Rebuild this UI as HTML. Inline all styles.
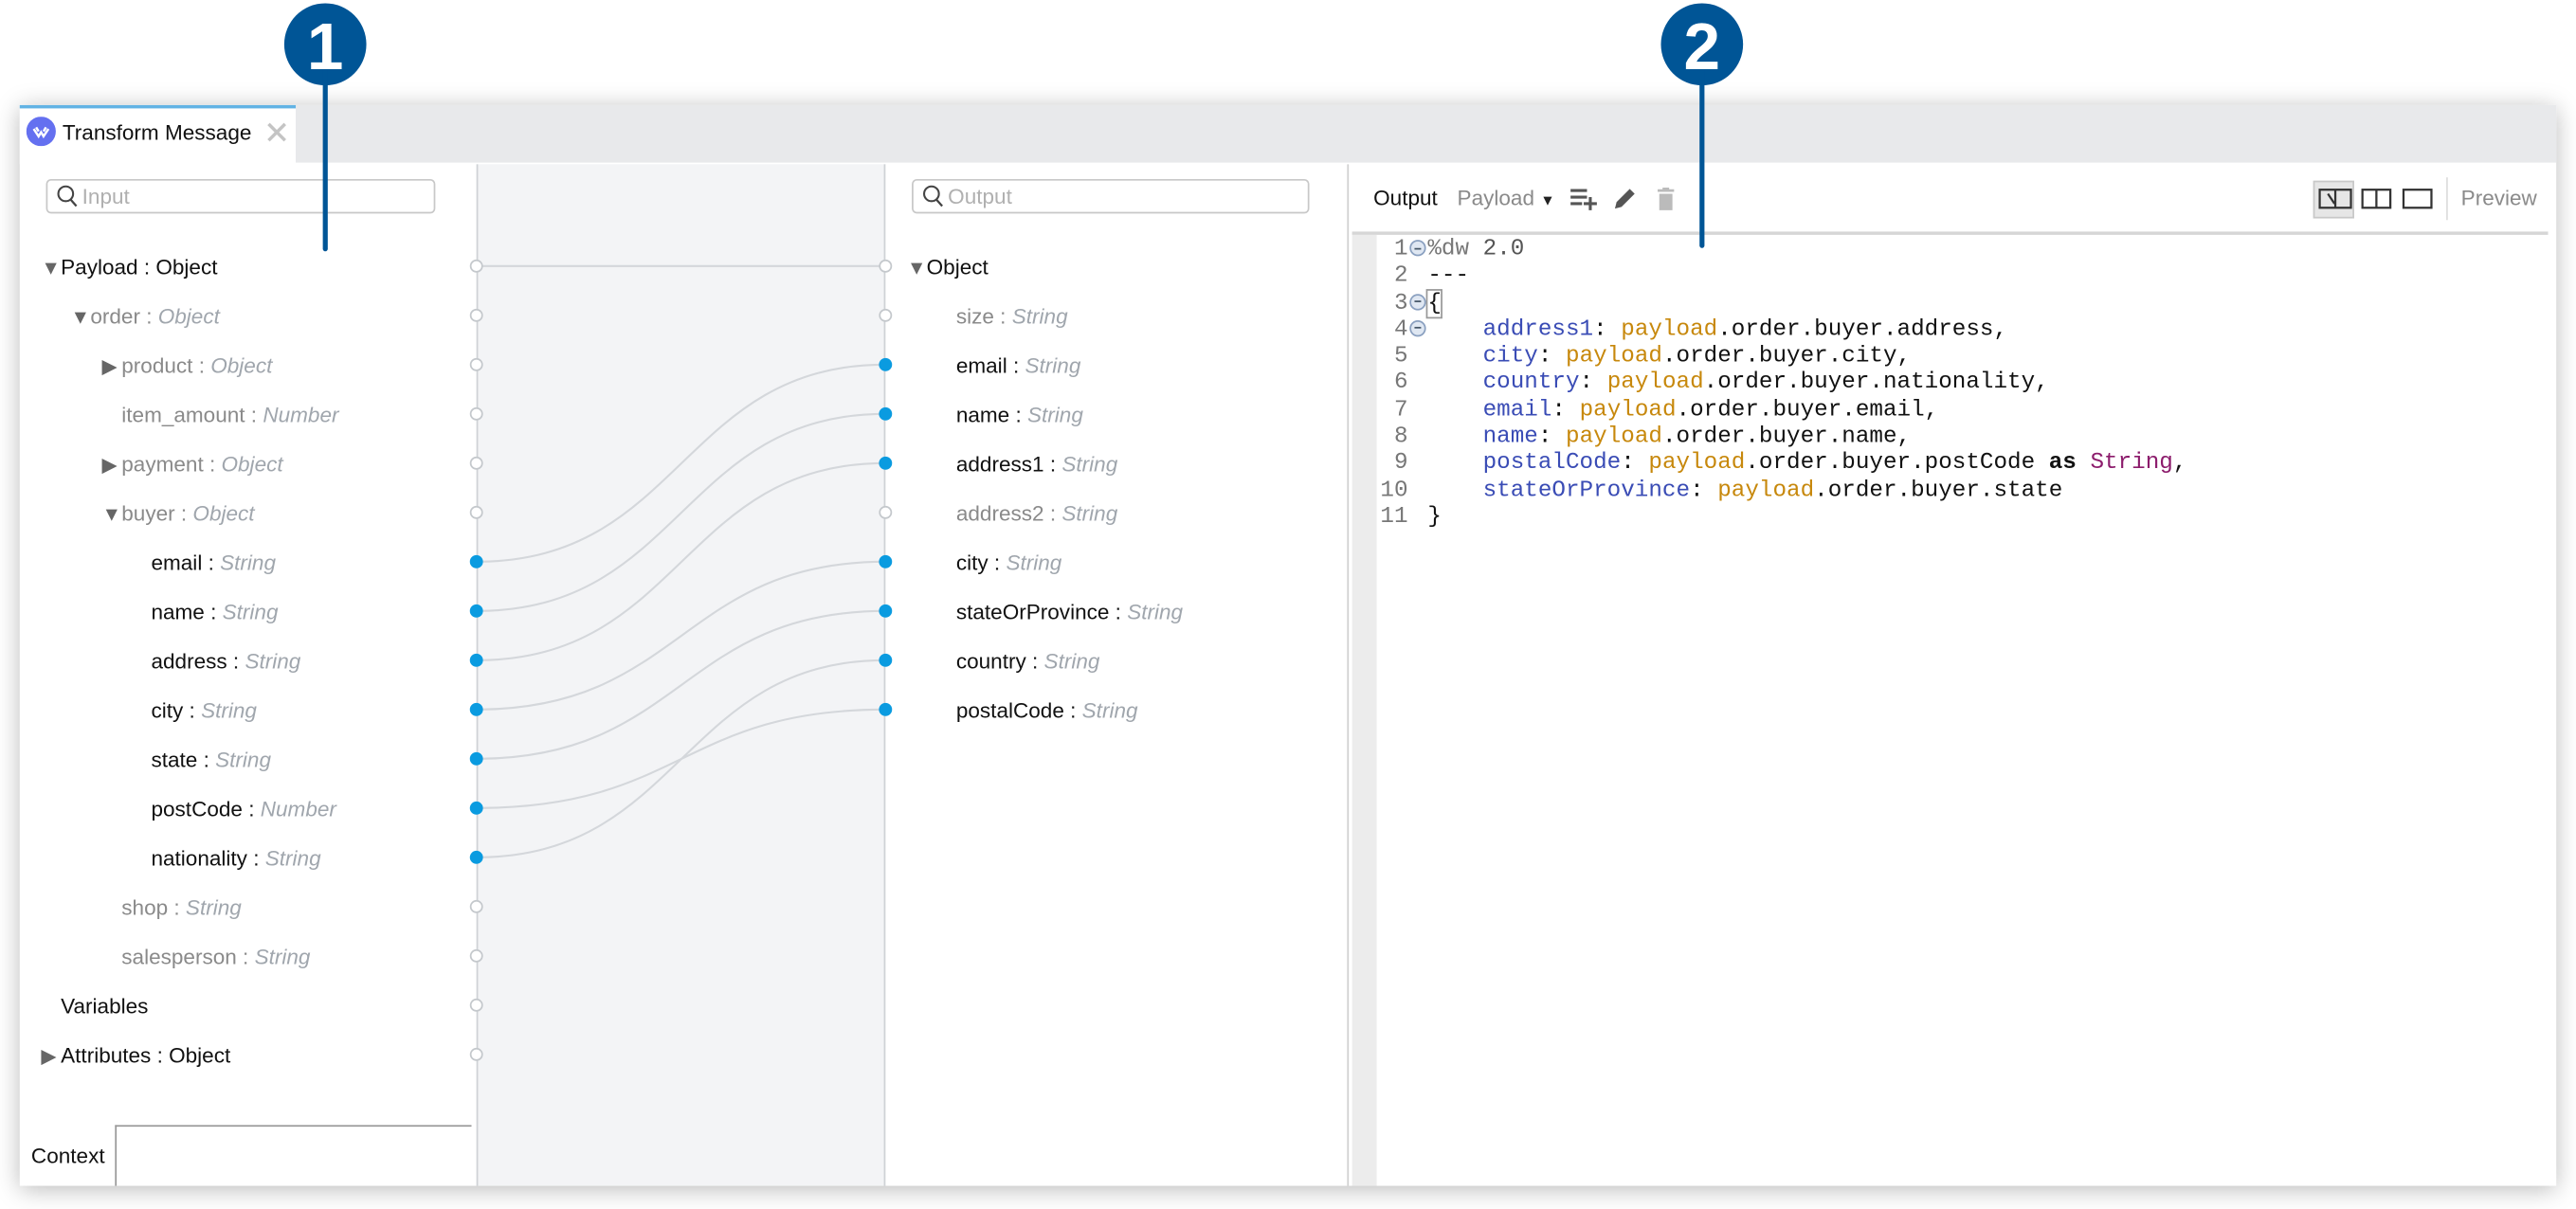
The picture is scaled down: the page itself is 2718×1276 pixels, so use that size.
<!DOCTYPE html>
<html><head><meta charset="utf-8"><style>
html,body{margin:0;padding:0;background:#fff;overflow:hidden;width:2718px;height:1276px}
#s{position:absolute;left:0;top:0;width:1568px;height:736px;transform:scale(1.73342);transform-origin:0 0;font-family:"Liberation Sans",sans-serif;font-size:13px;color:#111}
.a{position:absolute;white-space:nowrap}
.r{position:absolute;white-space:nowrap;line-height:18px;height:18px}
.g{color:#8a8a8a}
.t{color:#a0a6ad;font-style:italic}
.tri{display:inline-block;font-size:12px;color:#666;width:12px;margin-left:-12px}
.code{position:absolute;left:840px;top:144px;font-family:"Liberation Mono",monospace;font-size:14px;line-height:16.3px;white-space:pre;color:#111}
.ln{color:#777;display:inline-block;width:17px;text-align:right}
.k{color:#3a4cb5}.p{color:#c7880c}.s{color:#8c1c6c}
.fs{display:inline-block;width:12px;height:10px;vertical-align:-1px}
.f{display:inline-block;width:10px;height:10px;border:1px solid #8aa0c0;border-radius:50%;background:#dfe7f2;box-sizing:border-box;vertical-align:-1px;margin:0 1px 0 1px;position:relative}
.f:after{content:"";position:absolute;left:2px;top:3.5px;width:4px;height:1px;background:#456}
</style></head><body><div id="s">
<div class="a" style="left:12px;top:64px;width:1544px;height:658px;box-shadow:0 2px 14px rgba(0,0,0,0.28);background:#fff"></div>
<div class="a" style="left:12px;top:64px;width:1544px;height:35px;background:#e8e9eb"></div>
<div class="a" style="left:12px;top:64px;width:168px;height:36px;background:#fff;border-top:2px solid #62b3e4;box-sizing:border-box"></div>
<svg class="a" style="left:16px;top:71px" width="18" height="18" viewBox="0 0 18 18"><circle cx="9" cy="9" r="9" fill="#6470f0"/><path d="M4.5 7.5 L7.5 12 L9 9.5 L10.5 12 L13.5 7.5 M6 6.5 L7.5 9 M12 6.5 L10.5 9" stroke="#fff" stroke-width="1.4" fill="none"/></svg>
<div class="a" style="left:38px;top:72px;font-size:13px;line-height:18px">Transform Message</div>
<svg class="a" style="left:162px;top:74px" width="13" height="13"><path d="M1.5 1.5L11.5 11.5M11.5 1.5L1.5 11.5" stroke="#c4c4c4" stroke-width="2"/></svg>
<div class="a" style="left:290px;top:100px;width:249px;height:622px;background:#f3f4f6;border-left:1px solid #cfd2d6;border-right:1px solid #cfd2d6;box-sizing:border-box"></div>
<div class="a" style="left:820px;top:100px;width:1px;height:622px;background:#d0d0d0"></div>
<div class="a" style="left:28px;top:109px;width:237px;height:21px;border:1px solid #c8c8c8;border-radius:3px;box-sizing:border-box"></div>
<svg class="a" style="left:34px;top:112px" width="14" height="15"><circle cx="6" cy="6" r="4.5" stroke="#444" stroke-width="1.2" fill="none"/><path d="M9 9.5 L12.5 13.5" stroke="#444" stroke-width="1.3"/></svg>
<div class="a" style="left:50px;top:112px;color:#b0b0b0;line-height:16px">Input</div>
<div class="a" style="left:555px;top:109px;width:242px;height:21px;border:1px solid #c8c8c8;border-radius:3px;box-sizing:border-box"></div>
<svg class="a" style="left:561px;top:112px" width="14" height="15"><circle cx="6" cy="6" r="4.5" stroke="#444" stroke-width="1.2" fill="none"/><path d="M9 9.5 L12.5 13.5" stroke="#444" stroke-width="1.3"/></svg>
<div class="a" style="left:577px;top:112px;color:#b0b0b0;line-height:16px">Output</div>
<div class="r" style="left:37px;top:154px"><span class="tri">▼</span>Payload : Object</div>
<div class="r g" style="left:55px;top:184px"><span class="tri">▼</span>order : <span class="t">Object</span></div>
<div class="r g" style="left:74px;top:214px"><span class="tri">▶</span>product : <span class="t">Object</span></div>
<div class="r g" style="left:74px;top:244px">item_amount : <span class="t">Number</span></div>
<div class="r g" style="left:74px;top:274px"><span class="tri">▶</span>payment : <span class="t">Object</span></div>
<div class="r g" style="left:74px;top:304px"><span class="tri">▼</span>buyer : <span class="t">Object</span></div>
<div class="r" style="left:92px;top:334px">email : <span class="t">String</span></div>
<div class="r" style="left:92px;top:364px">name : <span class="t">String</span></div>
<div class="r" style="left:92px;top:394px">address : <span class="t">String</span></div>
<div class="r" style="left:92px;top:424px">city : <span class="t">String</span></div>
<div class="r" style="left:92px;top:454px">state : <span class="t">String</span></div>
<div class="r" style="left:92px;top:484px">postCode : <span class="t">Number</span></div>
<div class="r" style="left:92px;top:514px">nationality : <span class="t">String</span></div>
<div class="r g" style="left:74px;top:544px">shop : <span class="t">String</span></div>
<div class="r g" style="left:74px;top:574px">salesperson : <span class="t">String</span></div>
<div class="r" style="left:37px;top:604px">Variables</div>
<div class="r" style="left:37px;top:634px"><span class="tri">▶</span>Attributes : Object</div>
<div class="r" style="left:564px;top:154px"><span class="tri">▼</span>Object</div>
<div class="r g" style="left:582px;top:184px">size : <span class="t">String</span></div>
<div class="r" style="left:582px;top:214px">email : <span class="t">String</span></div>
<div class="r" style="left:582px;top:244px">name : <span class="t">String</span></div>
<div class="r" style="left:582px;top:274px">address1 : <span class="t">String</span></div>
<div class="r g" style="left:582px;top:304px">address2 : <span class="t">String</span></div>
<div class="r" style="left:582px;top:334px">city : <span class="t">String</span></div>
<div class="r" style="left:582px;top:364px">stateOrProvince : <span class="t">String</span></div>
<div class="r" style="left:582px;top:394px">country : <span class="t">String</span></div>
<div class="r" style="left:582px;top:424px">postalCode : <span class="t">String</span></div>
<div class="a" style="left:70px;top:685px;width:217px;height:37px;border-top:1px solid #999;border-left:1px solid #999;box-sizing:border-box"></div>
<div class="a" style="left:19px;top:695px;line-height:18px">Context</div>
<svg class="a" style="left:0;top:0" width="1568" height="736">
<g fill="none" stroke="#d4d7db" stroke-width="1.2">
<path d="M290 162 L539 162"/>
<path d="M290 342 C415 342 415 222 539 222"/>
<path d="M290 372 C415 372 415 252 539 252"/>
<path d="M290 402 C415 402 415 282 539 282"/>
<path d="M290 432 C415 432 415 342 539 342"/>
<path d="M290 462 C415 462 415 372 539 372"/>
<path d="M290 492 C415 492 415 432 539 432"/>
<path d="M290 522 C415 522 415 402 539 402"/>
</g>
<g fill="#fff" stroke="#c4c8cc" stroke-width="1">
<circle cx="290" cy="162" r="3.5"/><circle cx="290" cy="192" r="3.5"/><circle cx="290" cy="222" r="3.5"/><circle cx="290" cy="252" r="3.5"/><circle cx="290" cy="282" r="3.5"/><circle cx="290" cy="312" r="3.5"/><circle cx="290" cy="552" r="3.5"/><circle cx="290" cy="582" r="3.5"/><circle cx="290" cy="612" r="3.5"/><circle cx="290" cy="642" r="3.5"/>
<circle cx="539" cy="162" r="3.5"/><circle cx="539" cy="192" r="3.5"/><circle cx="539" cy="312" r="3.5"/>
</g>
<g fill="#0a9be0">
<circle cx="290" cy="342" r="4"/><circle cx="290" cy="372" r="4"/><circle cx="290" cy="402" r="4"/><circle cx="290" cy="432" r="4"/><circle cx="290" cy="462" r="4"/><circle cx="290" cy="492" r="4"/><circle cx="290" cy="522" r="4"/>
<circle cx="539" cy="222" r="4"/><circle cx="539" cy="252" r="4"/><circle cx="539" cy="282" r="4"/><circle cx="539" cy="342" r="4"/><circle cx="539" cy="372" r="4"/><circle cx="539" cy="402" r="4"/><circle cx="539" cy="432" r="4"/>
</g>
</svg>
<div class="a" style="left:836px;top:112px;line-height:18px">Output</div>
<div class="a g" style="left:887px;top:112px;line-height:18px">Payload <span style="color:#222;font-size:9px">▼</span></div>
<svg class="a" style="left:955px;top:113px" width="18" height="16"><path d="M1 3h10M1 7h10M1 11h7M13 7v8M9 11h8" stroke="#555" stroke-width="1.8"/></svg>
<svg class="a" style="left:981px;top:113px" width="16" height="16"><path d="M2 14 L3 10 L11 2 L14 5 L6 13 Z" fill="#555"/></svg>
<svg class="a" style="left:1007px;top:113px" width="14" height="16"><path d="M2 3h10M5 2h4" stroke="#bbb" stroke-width="1.6"/><rect x="3" y="5" width="8" height="10" fill="#bbb"/></svg>
<div class="a" style="left:1408px;top:110px;width:25px;height:23px;background:#e6e6e6;border:1px solid #c8c8c8;box-sizing:border-box"></div>
<svg class="a" style="left:1410px;top:113px" width="80" height="16"><g fill="none" stroke="#333" stroke-width="1.3"><rect x="2" y="2.5" width="19" height="11"/><path d="M11.5 2.5v11M7 5l4 6"/><rect x="28" y="2.5" width="17" height="11"/><path d="M36.5 2.5v11"/><rect x="53" y="2.5" width="17" height="11"/></g></svg>
<div class="a" style="left:1489px;top:108px;width:1px;height:26px;background:#ddd"></div>
<div class="a g" style="left:1498px;top:112px;line-height:18px">Preview</div>
<div class="a" style="left:823px;top:141px;width:728px;height:2px;background:#d6d6d6"></div>
<div class="a" style="left:823px;top:143px;width:15px;height:579px;background:#ececec"></div>
<div class="code"><span class="ln">1</span><span class="f"></span><span style="color:#777">%dw</span> <span style="color:#555">2.0</span>
<span class="ln">2</span><span class="fs"></span>---
<span class="ln">3</span><span class="f"></span><span style="outline:1px solid #999">{</span>
<span class="ln">4</span><span class="f"></span>    <span class="k">address1</span>: <span class="p">payload</span>.order.buyer.address,
<span class="ln">5</span><span class="fs"></span>    <span class="k">city</span>: <span class="p">payload</span>.order.buyer.city,
<span class="ln">6</span><span class="fs"></span>    <span class="k">country</span>: <span class="p">payload</span>.order.buyer.nationality,
<span class="ln">7</span><span class="fs"></span>    <span class="k">email</span>: <span class="p">payload</span>.order.buyer.email,
<span class="ln">8</span><span class="fs"></span>    <span class="k">name</span>: <span class="p">payload</span>.order.buyer.name,
<span class="ln">9</span><span class="fs"></span>    <span class="k">postalCode</span>: <span class="p">payload</span>.order.buyer.postCode <b>as</b> <span class="s">String</span>,
<span class="ln">10</span><span class="fs"></span>    <span class="k">stateOrProvince</span>: <span class="p">payload</span>.order.buyer.state
<span class="ln">11</span><span class="fs"></span>}</div>
<svg class="a" style="left:0;top:0" width="1568" height="160">
<g fill="#005596"><circle cx="198" cy="27" r="25"/><rect x="196.5" y="40" width="3" height="113" rx="1.5"/>
<circle cx="1036" cy="27" r="25"/><rect x="1034.5" y="40" width="3" height="111" rx="1.5"/></g>
<text x="198" y="42" text-anchor="middle" fill="#fff" font-family="Liberation Sans" font-weight="bold" font-size="40">1</text>
<text x="1036" y="42" text-anchor="middle" fill="#fff" font-family="Liberation Sans" font-weight="bold" font-size="40">2</text>
</svg>
</div></body></html>
